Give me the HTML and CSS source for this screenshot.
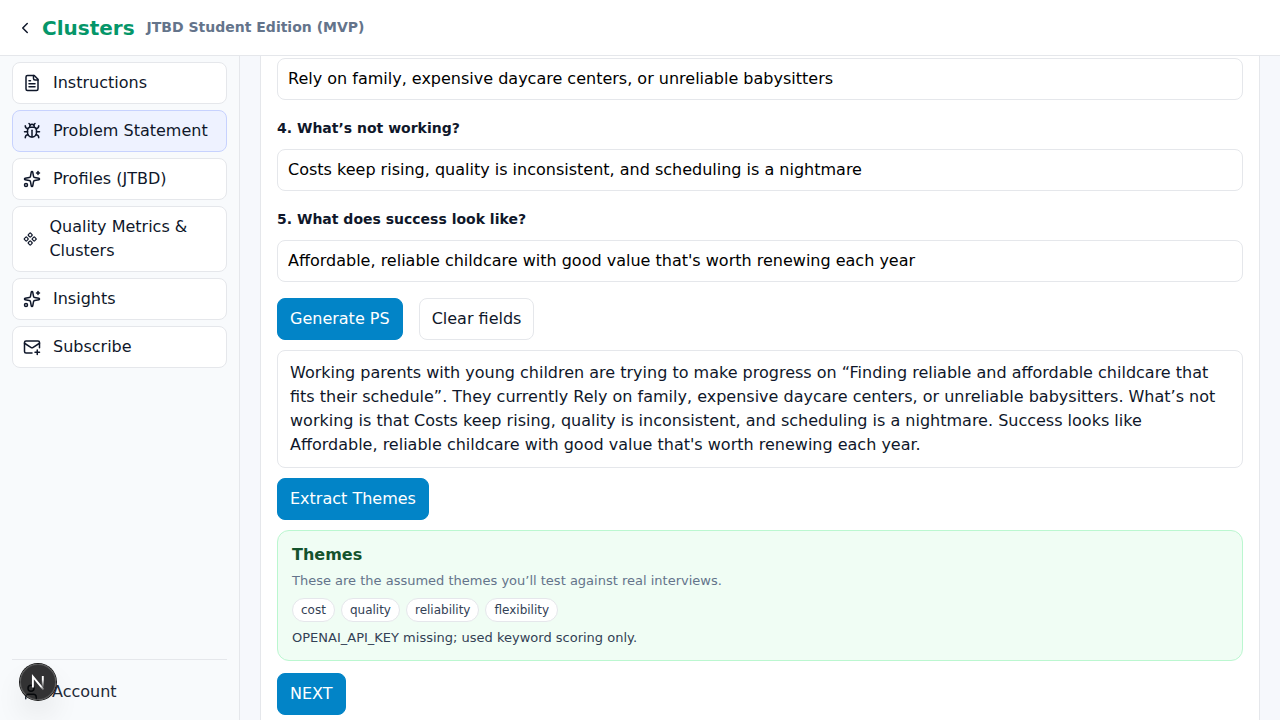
FILE: index.html
```html
<!DOCTYPE html>
<html lang="en">
<head>
<meta charset="utf-8">
<meta name="viewport" content="width=device-width, initial-scale=1">
<title>Clusters</title>
<link rel="stylesheet" href="styles.css">
</head>
<body>
<header class="topbar">
  <button class="back" type="button" aria-label="Back">
    <svg class="icon" viewBox="0 0 24 24"><path d="m15 18-6-6 6-6"/></svg>
  </button>
  <a class="brand" href="#">Clusters</a>
  <span class="edition">JTBD Student Edition (MVP)</span>
</header>
<div class="shell">
  <aside class="sidebar">
    <nav class="nav">
      <a class="nav-item" href="#"><svg class="icon" viewBox="0 0 24 24"><path d="M15 2H6a2 2 0 0 0-2 2v16a2 2 0 0 0 2 2h12a2 2 0 0 0 2-2V7Z"/><path d="M14 2v4a2 2 0 0 0 2 2h4"/><path d="M10 9H8"/><path d="M16 13H8"/><path d="M16 17H8"/></svg><span>Instructions</span></a>
      <a class="nav-item active" href="#" aria-current="page"><svg class="icon" viewBox="0 0 24 24"><path d="M12 20v-9"/><path d="M14 7a4 4 0 0 1 4 4v3a6 6 0 0 1-12 0v-3a4 4 0 0 1 4-4z"/><path d="M14.12 3.88 16 2"/><path d="M21 21a4 4 0 0 0-3.81-4"/><path d="M21 5a4 4 0 0 1-3.55 3.97"/><path d="M22 13h-4"/><path d="M3 21a4 4 0 0 1 3.81-4"/><path d="M3 5a4 4 0 0 0 3.55 3.97"/><path d="M6 13H2"/><path d="m8 2 1.88 1.88"/><path d="M9 7.13V6a3 3 0 1 1 6 0v1.13"/></svg><span>Problem Statement</span></a>
      <a class="nav-item" href="#"><svg class="icon" viewBox="0 0 24 24"><path d="M11.017 2.814a1 1 0 0 1 1.966 0l1.051 5.558a2 2 0 0 0 1.594 1.594l5.558 1.051a1 1 0 0 1 0 1.966l-5.558 1.051a2 2 0 0 0-1.594 1.594l-1.051 5.558a1 1 0 0 1-1.966 0l-1.051-5.558a2 2 0 0 0-1.594-1.594l-5.558-1.051a1 1 0 0 1 0-1.966l5.558-1.051a2 2 0 0 0 1.594-1.594z"/><path d="M20 2v4"/><path d="M22 4h-4"/><circle cx="4" cy="20" r="2"/></svg><span>Profiles (JTBD)</span></a>
      <a class="nav-item" href="#"><svg class="icon" viewBox="0 0 24 24"><path d="M15.536 11.293a1 1 0 0 0 0 1.414l2.376 2.377a1 1 0 0 0 1.414 0l2.377-2.377a1 1 0 0 0 0-1.414l-2.377-2.377a1 1 0 0 0-1.414 0z"/><path d="M2.297 11.293a1 1 0 0 0 0 1.414l2.377 2.377a1 1 0 0 0 1.414 0l2.377-2.377a1 1 0 0 0 0-1.414L6.088 8.916a1 1 0 0 0-1.414 0z"/><path d="M8.916 17.912a1 1 0 0 0 0 1.415l2.377 2.376a1 1 0 0 0 1.414 0l2.377-2.376a1 1 0 0 0 0-1.415l-2.377-2.376a1 1 0 0 0-1.414 0z"/><path d="M8.916 4.674a1 1 0 0 0 0 1.414l2.377 2.376a1 1 0 0 0 1.414 0l2.377-2.376a1 1 0 0 0 0-1.414l-2.377-2.377a1 1 0 0 0-1.414 0z"/></svg><span>Quality Metrics &amp; Clusters</span></a>
      <a class="nav-item" href="#"><svg class="icon" viewBox="0 0 24 24"><path d="M11.017 2.814a1 1 0 0 1 1.966 0l1.051 5.558a2 2 0 0 0 1.594 1.594l5.558 1.051a1 1 0 0 1 0 1.966l-5.558 1.051a2 2 0 0 0-1.594 1.594l-1.051 5.558a1 1 0 0 1-1.966 0l-1.051-5.558a2 2 0 0 0-1.594-1.594l-5.558-1.051a1 1 0 0 1 0-1.966l5.558-1.051a2 2 0 0 0 1.594-1.594z"/><path d="M20 2v4"/><path d="M22 4h-4"/><circle cx="4" cy="20" r="2"/></svg><span>Insights</span></a>
      <a class="nav-item" href="#"><svg class="icon" viewBox="0 0 24 24"><path d="M22 13V6a2 2 0 0 0-2-2H4a2 2 0 0 0-2 2v12c0 1.1.9 2 2 2h8"/><path d="m22 7-8.97 5.7a1.94 1.94 0 0 1-2.06 0L2 7"/><path d="M19 16v6"/><path d="M16 19h6"/></svg><span>Subscribe</span></a>
    </nav>
    <div class="account-area">
      <a class="account" href="#"><svg class="icon" viewBox="0 0 24 24"><path d="M19 21v-2a4 4 0 0 0-4-4H9a4 4 0 0 0-4 4v2"/><circle cx="12" cy="7" r="4"/></svg><span>Account</span></a>
    </div>
  </aside>
  <main class="main">
    <section class="card">
      <input class="field" type="text" aria-label="3. Current solution" value="Rely on family, expensive daycare centers, or unreliable babysitters">
      <label class="question" for="q4">4. What’s not working?</label>
      <input class="field" id="q4" type="text" value="Costs keep rising, quality is inconsistent, and scheduling is a nightmare">
      <label class="question" for="q5">5. What does success look like?</label>
      <input class="field" id="q5" type="text" value="Affordable, reliable childcare with good value that's worth renewing each year">
      <div class="actions">
        <button class="btn primary" type="button">Generate PS</button>
        <button class="btn" type="button">Clear fields</button>
      </div>
      <p class="statement">Working parents with young children are trying to make progress on “Finding reliable and affordable childcare that fits their schedule”. They currently Rely on family, expensive daycare centers, or unreliable babysitters. What’s not working is that Costs keep rising, quality is inconsistent, and scheduling is a nightmare. Success looks like Affordable, reliable childcare with good value that's worth renewing each year.</p>
      <button class="btn primary" type="button">Extract Themes</button>
      <div class="themes">
        <h2 class="themes-title">Themes</h2>
        <p class="themes-hint">These are the assumed themes you’ll test against real interviews.</p>
        <ul class="chips">
          <li class="chip">cost</li>
          <li class="chip">quality</li>
          <li class="chip">reliability</li>
          <li class="chip">flexibility</li>
        </ul>
        <p class="themes-note">OPENAI_API_KEY missing; used keyword scoring only.</p>
      </div>
      <button class="btn primary" type="button">NEXT</button>
    </section>
  </main>
</div>
<button class="dev-badge" type="button" aria-label="Open dev tools">
  <svg class="dev-mark" viewBox="0 0 36 36" fill="none" stroke-width="1.9">
    <defs>
      <linearGradient id="diag" gradientUnits="userSpaceOnUse" x1="18" y1="18" x2="24" y2="26"><stop offset="0.5" stop-color="#fff"/><stop offset="1" stop-color="#fff" stop-opacity="0.1"/></linearGradient>
      <linearGradient id="stem" gradientUnits="userSpaceOnUse" x1="22" y1="12" x2="22" y2="24"><stop offset="0.3" stop-color="#fff"/><stop offset="1" stop-color="#fff" stop-opacity="0"/></linearGradient>
    </defs>
    <path d="M12.9 23.6V12.6L23.6 25.6" stroke="url(#diag)"/>
    <path d="M22.8 12v11.6" stroke="url(#stem)"/>
  </svg>
</button>
</body>
</html>
```
FILE: styles.css
```css
* { box-sizing: border-box; }

body {
  margin: 0;
  height: 100vh;
  display: flex;
  flex-direction: column;
  overflow: hidden;
  font: 16px/24px "DejaVu Sans", sans-serif;
  color: #0f172a;
  background: #f6f8fc;
}

a { color: inherit; text-decoration: none; }
button, input { font: inherit; }
p, h2, ul { margin: 0; padding: 0; }

.icon {
  width: 18px;
  height: 18px;
  fill: none;
  stroke: currentColor;
  stroke-width: 2;
  stroke-linecap: round;
  stroke-linejoin: round;
}

.topbar {
  flex: none;
  display: flex;
  align-items: center;
  height: 56px;
  padding: 0 16px;
  background: #fff;
  border-bottom: 1px solid #e5e7eb;
}

.back {
  display: flex;
  margin-right: 8px;
  padding: 0;
  border: 0;
  background: none;
  color: inherit;
}

.brand {
  margin-right: 12px;
  font-size: 20px;
  font-weight: 700;
  color: #059669;
}

.edition {
  padding-bottom: 2px;
  font-size: 14px;
  font-weight: 700;
  color: #64748b;
}

.shell {
  flex: 1;
  min-height: 0;
  display: flex;
}

.sidebar {
  flex: none;
  width: 240px;
  display: flex;
  flex-direction: column;
  justify-content: space-between;
  padding: 6px 12px 8px;
  background: #f8fafc;
  border-right: 1px solid #e5e7eb;
}

.nav {
  display: flex;
  flex-direction: column;
  gap: 6px;
}

.nav-item {
  display: flex;
  align-items: center;
  gap: 12px;
  padding: 8px 10px;
  background: #fff;
  border: 1px solid #e5e7eb;
  border-radius: 8px;
}

.nav-item.active {
  background: #eef2ff;
  border-color: #c7d2fe;
}

.account-area {
  padding-top: 12px;
  border-top: 1px solid #e5e7eb;
}

.account {
  display: flex;
  align-items: center;
  gap: 12px;
  padding: 8px 10px;
  color: #1f2937;
}

.main {
  flex: 1;
  min-width: 0;
  display: flex;
  padding: 0 20px;
  overflow: hidden;
}

.card {
  flex: 1;
  min-width: 0;
  display: flex;
  flex-direction: column;
  align-items: flex-start;
  padding: 2px 16px 0;
  background: #fff;
  border: solid #e5e7eb;
  border-width: 0 1px;
}

.field {
  width: 100%;
  height: 42px;
  flex: none;
  padding: 8px 10px 10px;
  color: #000;
  background: #fff;
  border: 1px solid #e5e7eb;
  border-radius: 8px;
}

.question {
  margin: 18px 0 10px;
  font-size: 14px;
  line-height: 21px;
  font-weight: 700;
}

.actions {
  display: flex;
  gap: 16px;
  margin-top: 16px;
}

.btn {
  flex: none;
  padding: 8px 12px;
  color: #0f172a;
  background: #fff;
  border: 1px solid #e5e7eb;
  border-radius: 8px;
}

.btn.primary {
  color: #fff;
  background: #0284c7;
  border-color: #0284c7;
}

.statement {
  width: 100%;
  margin: 10px 0;
  padding: 10px 12px;
  border: 1px solid #e5e7eb;
  border-radius: 8px;
}

.themes {
  width: 100%;
  margin: 10px 0 12px;
  padding: 12px 14px;
  background: #f0fdf4;
  border: 1px solid #bbf7d0;
  border-radius: 12px;
}

.themes-title {
  font-size: 16px;
  line-height: 24px;
  color: #14532d;
}

.themes-hint {
  margin: 4px 0 7px;
  font-size: 13px;
  line-height: 20px;
  color: #64748b;
}

.chips {
  display: flex;
  flex-wrap: wrap;
  gap: 6px;
  list-style: none;
}

.chip {
  padding: 2px 8px;
  font-size: 12px;
  line-height: 18px;
  color: #334155;
  background: #fff;
  border: 1px solid #e5e7eb;
  border-radius: 12px;
}

.themes-note {
  margin-top: 6px;
  font-size: 13px;
  line-height: 20px;
  color: #334155;
}

.dev-badge {
  position: fixed;
  left: 20px;
  bottom: 20px;
  width: 36px;
  height: 36px;
  padding: 0;
  border: 0;
  border-radius: 50%;
  background: rgba(0, 0, 0, 0.8);
  box-shadow: 0 0 0 1px #171717, inset 0 0 0 1px rgba(255, 255, 255, 0.14), 0 16px 32px -8px rgba(0, 0, 0, 0.24);
}

.dev-mark {
  display: block;
  width: 36px;
  height: 36px;
}
```
